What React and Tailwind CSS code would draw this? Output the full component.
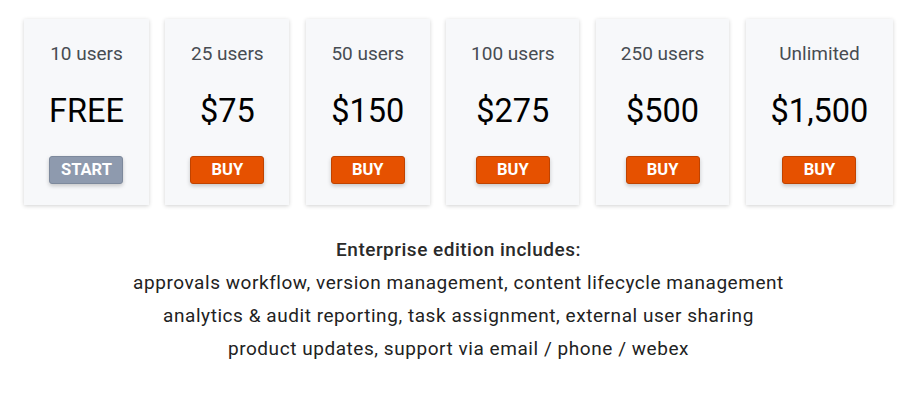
import React from 'react';

const plans = [
  { users: '10 users', price: 'FREE', action: 'START', free: true },
  { users: '25 users', price: '$75', action: 'BUY' },
  { users: '50 users', price: '$150', action: 'BUY' },
  { users: '100 users', price: '$275', action: 'BUY' },
  { users: '250 users', price: '$500', action: 'BUY' },
  { users: 'Unlimited', price: '$1,500', action: 'BUY' },
];

const features = [
  'approvals workflow, version management, content lifecycle management',
  'analytics & audit reporting, task assignment, external user sharing',
  'product updates, support via email / phone / webex',
];

const PlanCard = ({ plan }) => (
  <div className="flex flex-col items-center px-[25px] pt-[23px] h-[186px] bg-[#f7f8fa] shadow-[0_1px_4px_rgba(0,0,0,0.18)]">
    <div className="text-[19px] leading-[24px] text-[#474c52]">{plan.users}</div>
    <div className="mt-[25px] text-[32.5px] leading-[40px] text-black">{plan.price}</div>
    <button
      className={`mt-[25px] w-[74px] h-[28px] rounded-[3px] border text-[16.5px] font-bold text-white shadow-[0_2px_4px_rgba(0,0,0,0.2)] ${
        plan.free ? 'bg-[#8e9aae] border-[#7d899c]' : 'bg-[#e65100] border-[#c04300]'
      }`}
    >
      {plan.action}
    </button>
  </div>
);

export default function App() {
  return (
    <div className="w-[905px] h-[394px] bg-white font-['Roboto',sans-serif]">
      <div className="flex gap-[16.4px] pl-[24px] pt-[19px]">
        {plans.map((plan) => (
          <PlanCard key={plan.users} plan={plan} />
        ))}
      </div>
      <div className="mt-[28px] pl-[12px] flex flex-col items-center text-[19px] leading-[33px] text-[#222]">
        <div className="font-medium tracking-[0.5px] text-[#2a2a2a]">Enterprise edition includes:</div>
        {features.map((line) => (
          <div key={line} className="tracking-[0.55px]">{line}</div>
        ))}
      </div>
    </div>
  );
}
